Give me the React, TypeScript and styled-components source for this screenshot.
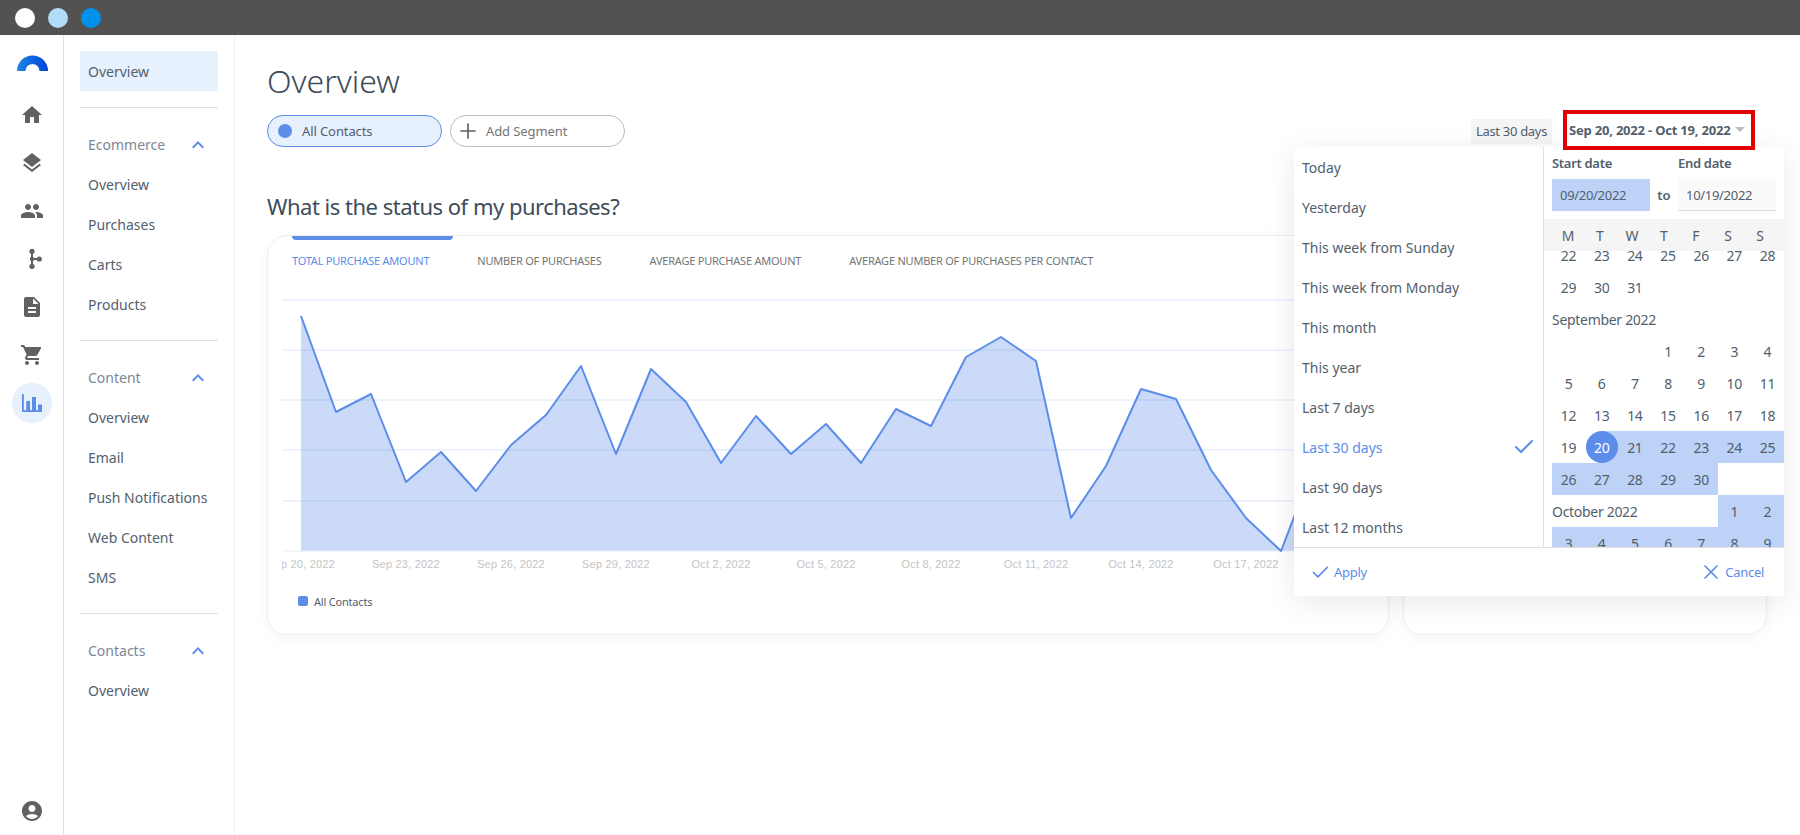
import React from "react";
import styled, { createGlobalStyle } from "styled-components";
import { Check, Plus, X } from "lucide-react";
import {
  MdHome,
  MdLayers,
  MdPeople,
  MdDescription,
  MdShoppingCart,
  MdAccountCircle,
  MdExpandLess,
} from "react-icons/md";

const BLUE = "#5b8de9";
const RANGE = "#bdd2f7";
const TEXT = "#52606d";
const HEAD = "#3e4c59";
const ICON = "#616161";

const GlobalStyle = createGlobalStyle`
  * { box-sizing: border-box; }
  html, body { margin: 0; height: 100%; background: #fff; }
  body {
    font-family: "Noto Sans", "Open Sans", sans-serif;
    font-size: 14px;
    color: ${TEXT};
    overflow: hidden;
  }
`;

const Shell = styled.div`
  display: flex;
  flex-direction: column;
  height: 100vh;
`;

const TitleBar = styled.div`
  display: flex;
  align-items: center;
  gap: 13px;
  height: 35px;
  padding-left: 15px;
  background: #525252;
`;

const WindowDot = styled.span<{ $color: string }>`
  width: 20px;
  height: 20px;
  border-radius: 50%;
  background: ${({ $color }) => $color};
`;

const Body = styled.div`
  display: flex;
  flex: 1;
  min-height: 0;
`;

const Rail = styled.nav`
  display: flex;
  flex-direction: column;
  align-items: center;
  width: 64px;
  padding: 20px 0 12px 1px;
  border-right: 1px solid #e0e0e0;
  color: ${ICON};
`;

const LogoSlot = styled.div`
  height: 16px;
  margin-bottom: 20px;
  line-height: 0;
`;

const RailItem = styled.div<{ $active?: boolean }>`
  position: relative;
  display: flex;
  align-items: center;
  justify-content: center;
  height: 48px;
  width: 48px;
  color: ${({ $active }) => ($active ? BLUE : ICON)};
  &::before {
    content: "";
    display: ${({ $active }) => ($active ? "block" : "none")};
    position: absolute;
    width: 40px;
    height: 40px;
    border-radius: 50%;
    background: #e6f1fd;
  }
  svg {
    position: relative;
  }
`;

const RailFoot = styled.div`
  margin-top: auto;
  height: 24px;
`;

const SubNav = styled.nav`
  width: 171px;
  padding: 16px 16px 0;
  border-right: 1px solid #eeeeee;
`;

const NavLink = styled.div<{ $active?: boolean }>`
  display: flex;
  align-items: center;
  height: 40px;
  padding-left: 8px;
  font-size: 14px;
  color: ${TEXT};
  background: ${({ $active }) => ($active ? "#e6f1fd" : "transparent")};
`;

const NavHeader = styled.div`
  display: flex;
  align-items: center;
  justify-content: space-between;
  height: 40px;
  padding: 0 8px;
  color: #7b8794;
  svg {
    color: ${BLUE};
  }
`;

const NavSection = styled.section`
  padding: 16.5px 0 15.5px;
  border-top: 1px solid #e0e0e0;
  &:first-of-type {
    margin-top: 16px;
  }
`;

const Main = styled.main`
  flex: 1;
  padding: 22px 33px 0 32px;
  min-width: 0;
`;

const PageTitle = styled.h1`
  margin: 0;
  font-size: 32px;
  font-weight: 300;
  line-height: 48px;
  color: ${HEAD};
`;

const Toolbar = styled.div`
  position: relative;
  display: flex;
  align-items: center;
  justify-content: space-between;
  height: 32px;
  margin-top: 10px;
`;

const Pills = styled.div`
  display: flex;
  gap: 8px;
`;

const Pill = styled.div<{ $active?: boolean }>`
  display: flex;
  align-items: center;
  width: 175px;
  height: 32px;
  border-radius: 16px;
  font-size: 13px;
  letter-spacing: -0.1px;
  border: 1px solid ${({ $active }) => ($active ? BLUE : "#bdbdbd")};
  background: ${({ $active }) => ($active ? "#e6f1fd" : "#fff")};
  color: ${({ $active }) => ($active ? TEXT : "#757575")};
  padding-left: 10px;
  svg {
    color: ${ICON};
    margin-left: -5px;
    margin-right: 6px;
  }
`;

const PillDot = styled.span`
  width: 14px;
  height: 14px;
  margin-right: 10px;
  border-radius: 50%;
  background: ${BLUE};
`;

const DateControls = styled.div`
  display: flex;
  align-items: center;
  gap: 11px;
  margin-right: 12px;
`;

const RangeTag = styled.div`
  display: flex;
  align-items: center;
  justify-content: center;
  width: 81px;
  height: 25px;
  border-radius: 2px;
  background: #f5f5f5;
  font-size: 13px;
  letter-spacing: -0.3px;
  color: ${TEXT};
`;

const RangeButton = styled.div`
  position: relative;
  z-index: 3;
  display: flex;
  align-items: center;
  justify-content: space-between;
  width: 192px;
  height: 40px;
  margin-top: -3px;
  padding: 0 6px 0 2px;
  border: 4px solid #e00000;
  font-size: 13px;
  font-weight: 700;
  letter-spacing: -0.2px;
  color: ${TEXT};
  background: #fff;
`;

const Caret = styled.span`
  width: 0;
  height: 0;
  border-left: 5px solid transparent;
  border-right: 5px solid transparent;
  border-top: 5px solid #bdbdbd;
`;

const Popover = styled.div`
  position: absolute;
  z-index: 2;
  top: 32px;
  right: -17px;
  display: flex;
  flex-direction: column;
  width: 490px;
  height: 449px;
  border-radius: 4px;
  background: #fff;
  box-shadow: 0 6px 30px rgba(0, 0, 0, 0.09);
`;

const PopoverTop = styled.div`
  display: flex;
  height: 401px;
  border-bottom: 1px solid #e0e0e0;
`;

const PresetList = styled.ul`
  width: 250px;
  margin: 0;
  padding: 0;
  list-style: none;
  overflow: hidden;
  border-right: 1px solid #e0e0e0;
`;

const Preset = styled.li<{ $active?: boolean }>`
  display: flex;
  align-items: center;
  justify-content: space-between;
  height: 40px;
  padding: 0 7px 0 8px;
  font-size: 14px;
  color: ${({ $active }) => ($active ? BLUE : TEXT)};
`;

const CalendarPanel = styled.div`
  display: flex;
  flex-direction: column;
  flex: 1;
  min-width: 0;
`;

const DateFields = styled.div`
  display: flex;
  align-items: flex-end;
  height: 72px;
  padding: 0 8px 8px;
`;

const DateField = styled.div`
  display: flex;
  flex-direction: column;
  width: 98px;
`;

const FieldLabel = styled.label`
  font-size: 13px;
  font-weight: 600;
  line-height: 20px;
  letter-spacing: -0.3px;
  margin-bottom: 6px;
`;

const FieldValue = styled.div<{ $focused?: boolean }>`
  display: flex;
  align-items: center;
  height: 32px;
  padding-left: 8px;
  font-size: 13px;
  letter-spacing: -0.3px;
  background: ${({ $focused }) => ($focused ? RANGE : "#fafafa")};
  border-bottom: ${({ $focused }) => ($focused ? "0" : "1px solid #e0e0e0")};
`;

const ToLabel = styled.span`
  display: flex;
  align-items: center;
  justify-content: center;
  width: 28px;
  height: 32px;
  font-size: 13px;
  font-weight: 600;
`;

const WeekHeader = styled.div`
  position: relative;
  z-index: 1;
  display: grid;
  grid-template-columns: repeat(7, 32px);
  height: 32px;
  padding-left: 8px;
  background: #f5f5f5;
`;

const WeekName = styled.span`
  display: flex;
  align-items: center;
  justify-content: center;
`;

const CalendarScroll = styled.div`
  flex: 1;
  min-height: 0;
  overflow: hidden;
`;

const CalendarGrid = styled.div`
  display: grid;
  grid-template-columns: repeat(7, 1fr);
  grid-auto-rows: 32px;
  margin: -12px 0 0 8px;
  letter-spacing: -0.3px;
`;

const MonthName = styled.div<{ $span: number }>`
  grid-column: span ${({ $span }) => $span};
  display: flex;
  align-items: center;
  font-size: 14px;
`;

type RangeKind = "none" | "full" | "start";

const DayCell = styled.div<{ $range: RangeKind; $column?: number }>`
  position: relative;
  display: flex;
  align-items: center;
  justify-content: center;
  grid-column: ${({ $column }) => $column ?? "auto"};
  background: ${({ $range }) =>
    $range === "full"
      ? RANGE
      : $range === "start"
      ? `linear-gradient(90deg, transparent 50%, ${RANGE} 50%)`
      : "transparent"};
`;

const SelectedDay = styled.span`
  display: flex;
  align-items: center;
  justify-content: center;
  width: 32px;
  height: 32px;
  border-radius: 50%;
  background: ${BLUE};
  color: #fff;
`;

const PopoverFoot = styled.div`
  display: flex;
  align-items: center;
  justify-content: space-between;
  flex: 1;
  padding: 0 20px 0 16px;
`;

const FootAction = styled.button<{ $gap: number }>`
  display: flex;
  align-items: center;
  gap: ${({ $gap }) => $gap}px;
  padding: 0;
  border: 0;
  background: none;
  font: inherit;
  font-size: 13px;
  letter-spacing: -0.3px;
  color: ${BLUE};
`;

const SectionTitle = styled.h2`
  margin: 43px 0 13px;
  font-size: 22px;
  font-weight: 400;
  line-height: 32px;
  letter-spacing: -0.5px;
  color: ${HEAD};
`;

const CardRow = styled.div`
  display: grid;
  grid-template-columns: 1122px 364px;
  gap: 14px;
`;

const Card = styled.div`
  height: 400px;
  border: 1px solid #eeeeee;
  border-radius: 20px;
  background: #fff;
  box-shadow: 0 4px 14px rgba(0, 0, 0, 0.04);
  overflow: hidden;
`;

const Tabs = styled.div`
  display: flex;
  gap: 24px;
  height: 48px;
  padding-left: 24px;
`;

const Tab = styled.div<{ $active?: boolean }>`
  position: relative;
  display: flex;
  align-items: center;
  padding-right: 24px;
  font-size: 11px;
  letter-spacing: -0.22px;
  text-transform: uppercase;
  color: ${({ $active }) => ($active ? BLUE : "#757575")};
  &::before {
    content: "";
    display: ${({ $active }) => ($active ? "block" : "none")};
    position: absolute;
    top: -1px;
    left: 0;
    right: 0;
    height: 5px;
    border-radius: 0 0 4px 4px;
    background: ${BLUE};
  }
`;

const ChartSvg = styled.svg`
  display: block;
  margin: 6px 0 0 14px;
`;

const Legend = styled.div`
  display: flex;
  align-items: center;
  gap: 6px;
  height: 16px;
  margin-top: 13px;
  padding-left: 30px;
  font-size: 11px;
  letter-spacing: -0.2px;
  color: ${TEXT};
`;

const LegendSwatch = styled.span`
  width: 10px;
  height: 10px;
  border-radius: 2px;
  background: ${BLUE};
`;

const Logo = () => (
  <svg width="31" height="16" viewBox="0 0 31 16">
    <defs>
      <linearGradient id="logoFill" x1="0" x2="1" y1="0" y2="0">
        <stop offset="0" stopColor="#1e88e5" />
        <stop offset="1" stopColor="#0041d8" />
      </linearGradient>
    </defs>
    <path d="M0 16A15.5 15.5 0 0 1 31 16H22.5A7 7 0 0 0 8.5 16Z" fill="url(#logoFill)" />
  </svg>
);

const BranchIcon = () => (
  <svg width="24" height="24" viewBox="0 0 24 24" fill="currentColor">
    <path d="M12 4.3V19.3M12 12H19.3" stroke="currentColor" strokeWidth="2" />
    <circle cx="12" cy="4.3" r="2.6" />
    <circle cx="12" cy="12" r="2.2" />
    <circle cx="12" cy="19.3" r="2.6" />
    <circle cx="19.3" cy="12" r="2.6" />
  </svg>
);

const ChartIcon = () => (
  <svg width="24" height="24" viewBox="0 0 24 24" fill="currentColor">
    <path d="M2 3H3.8V19.3H6.3V10H10V19.3H12V6H16V19.3H18V13.6H22V21H2Z" />
  </svg>
);

const chartY = [
  316, 412, 394, 482, 452, 491, 445, 415, 366, 454, 369, 402, 463, 416, 454,
  424, 463, 409, 426, 357, 337, 361, 518, 466, 389, 399, 470, 518, 551, 460,
];
const chartX = (i: number) => 301 + i * 35;
const chartPoints = chartY.map((y, i) => `${chartX(i)},${y}`).join(" ");
const gridLines = [300, 350, 400, 450, 501];
const axisLabels = [
  "Sep 20, 2022",
  "Sep 23, 2022",
  "Sep 26, 2022",
  "Sep 29, 2022",
  "Oct 2, 2022",
  "Oct 5, 2022",
  "Oct 8, 2022",
  "Oct 11, 2022",
  "Oct 14, 2022",
  "Oct 17, 2022",
];

const PurchaseChart = () => (
  <ChartSvg width="1090" height="290" viewBox="282 290 1090 290">
    <polygon points={`${chartX(0)},551 ${chartPoints} ${chartX(29)},551`} fill={BLUE} fillOpacity="0.32" />
    {gridLines.map((y) => (
      <line key={y} x1="282" x2="1372" y1={y} y2={y} stroke={BLUE} strokeOpacity="0.22" />
    ))}
    <line x1="282" x2="1372" y1="551" y2="551" stroke="#e6ecf8" />
    <polyline points={chartPoints} fill="none" stroke={BLUE} strokeWidth="2" strokeLinejoin="round" />
    {axisLabels.map((label, i) => (
      <text
        key={label}
        x={chartX(i * 3)}
        y="568"
        textAnchor="middle"
        fontFamily="'Liberation Sans', Arial, sans-serif"
        fontSize="11"
        letterSpacing="0.2"
        fill="#c4c4c4"
      >
        {label}
      </text>
    ))}
  </ChartSvg>
);

const presets = [
  "Today",
  "Yesterday",
  "This week from Sunday",
  "This week from Monday",
  "This month",
  "This year",
  "Last 7 days",
  "Last 30 days",
  "Last 90 days",
  "Last 12 months",
];

const dayRange = (from: number, to: number) =>
  Array.from({ length: to - from + 1 }, (_, i) => from + i);

const Day = ({ n, range = "none", column }: { n: number; range?: RangeKind; column?: number }) => (
  <DayCell $range={range} $column={column}>
    {n}
  </DayCell>
);

const Calendar = () => (
  <CalendarGrid>
    {dayRange(22, 31).map((n) => (
      <Day key={`aug${n}`} n={n} />
    ))}
    <MonthName $span={4} />
    <MonthName $span={7}>September 2022</MonthName>
    {dayRange(1, 4).map((n) => (
      <Day key={`sep${n}`} n={n} column={n + 3} />
    ))}
    {dayRange(5, 19).map((n) => (
      <Day key={`sep${n}`} n={n} />
    ))}
    <DayCell $range="start">
      <SelectedDay>20</SelectedDay>
    </DayCell>
    {dayRange(21, 30).map((n) => (
      <Day key={`sep${n}`} n={n} range="full" />
    ))}
    <DayCell $range="none" />
    <DayCell $range="none" />
    <MonthName $span={5}>October 2022</MonthName>
    {dayRange(1, 9).map((n) => (
      <Day key={`oct${n}`} n={n} range="full" />
    ))}
  </CalendarGrid>
);

const DatePopover = () => (
  <Popover>
    <PopoverTop>
      <PresetList>
        {presets.map((p) => (
          <Preset key={p} $active={p === "Last 30 days"}>
            {p}
            {p === "Last 30 days" && <Check size={24} strokeWidth={2} />}
          </Preset>
        ))}
      </PresetList>
      <CalendarPanel>
        <DateFields>
          <DateField>
            <FieldLabel>Start date</FieldLabel>
            <FieldValue $focused>09/20/2022</FieldValue>
          </DateField>
          <ToLabel>to</ToLabel>
          <DateField>
            <FieldLabel>End date</FieldLabel>
            <FieldValue>10/19/2022</FieldValue>
          </DateField>
        </DateFields>
        <WeekHeader>
          {["M", "T", "W", "T", "F", "S", "S"].map((d, i) => (
            <WeekName key={i}>{d}</WeekName>
          ))}
        </WeekHeader>
        <CalendarScroll>
          <Calendar />
        </CalendarScroll>
      </CalendarPanel>
    </PopoverTop>
    <PopoverFoot>
      <FootAction $gap={3}>
        <Check size={21} strokeWidth={2} />
        Apply
      </FootAction>
      <FootAction $gap={2}>
        <X size={24} strokeWidth={1.7} />
        Cancel
      </FootAction>
    </PopoverFoot>
  </Popover>
);

const navSections = [
  { title: "Ecommerce", links: ["Overview", "Purchases", "Carts", "Products"] },
  { title: "Content", links: ["Overview", "Email", "Push Notifications", "Web Content", "SMS"] },
  { title: "Contacts", links: ["Overview"] },
];

const tabs = [
  "Total purchase amount",
  "Number of purchases",
  "Average purchase amount",
  "Average number of purchases per contact",
];

const App = () => (
  <Shell>
    <GlobalStyle />
    <TitleBar>
      <WindowDot $color="#ffffff" />
      <WindowDot $color="#b3dcf8" />
      <WindowDot $color="#0091ea" />
    </TitleBar>
    <Body>
      <Rail>
        <LogoSlot>
          <Logo />
        </LogoSlot>
        <RailItem>
          <MdHome size={24} />
        </RailItem>
        <RailItem>
          <MdLayers size={24} />
        </RailItem>
        <RailItem>
          <MdPeople size={24} />
        </RailItem>
        <RailItem>
          <BranchIcon />
        </RailItem>
        <RailItem>
          <MdDescription size={24} />
        </RailItem>
        <RailItem>
          <MdShoppingCart size={24} />
        </RailItem>
        <RailItem $active>
          <ChartIcon />
        </RailItem>
        <RailFoot>
          <MdAccountCircle size={24} />
        </RailFoot>
      </Rail>
      <SubNav>
        <NavLink $active>Overview</NavLink>
        {navSections.map((section) => (
          <NavSection key={section.title}>
            <NavHeader>
              {section.title}
              <MdExpandLess size={24} />
            </NavHeader>
            {section.links.map((link) => (
              <NavLink key={link}>{link}</NavLink>
            ))}
          </NavSection>
        ))}
      </SubNav>
      <Main>
        <PageTitle>Overview</PageTitle>
        <Toolbar>
          <Pills>
            <Pill $active>
              <PillDot />
              All Contacts
            </Pill>
            <Pill>
              <Plus size={24} strokeWidth={1.7} />
              Add Segment
            </Pill>
          </Pills>
          <DateControls>
            <RangeTag>Last 30 days</RangeTag>
            <RangeButton>
              Sep 20, 2022 - Oct 19, 2022
              <Caret />
            </RangeButton>
          </DateControls>
          <DatePopover />
        </Toolbar>
        <SectionTitle>What is the status of my purchases?</SectionTitle>
        <CardRow>
          <Card>
            <Tabs>
              {tabs.map((t, i) => (
                <Tab key={t} $active={i === 0}>
                  {t}
                </Tab>
              ))}
            </Tabs>
            <PurchaseChart />
            <Legend>
              <LegendSwatch />
              All Contacts
            </Legend>
          </Card>
          <Card />
        </CardRow>
      </Main>
    </Body>
  </Shell>
);

export default App;
